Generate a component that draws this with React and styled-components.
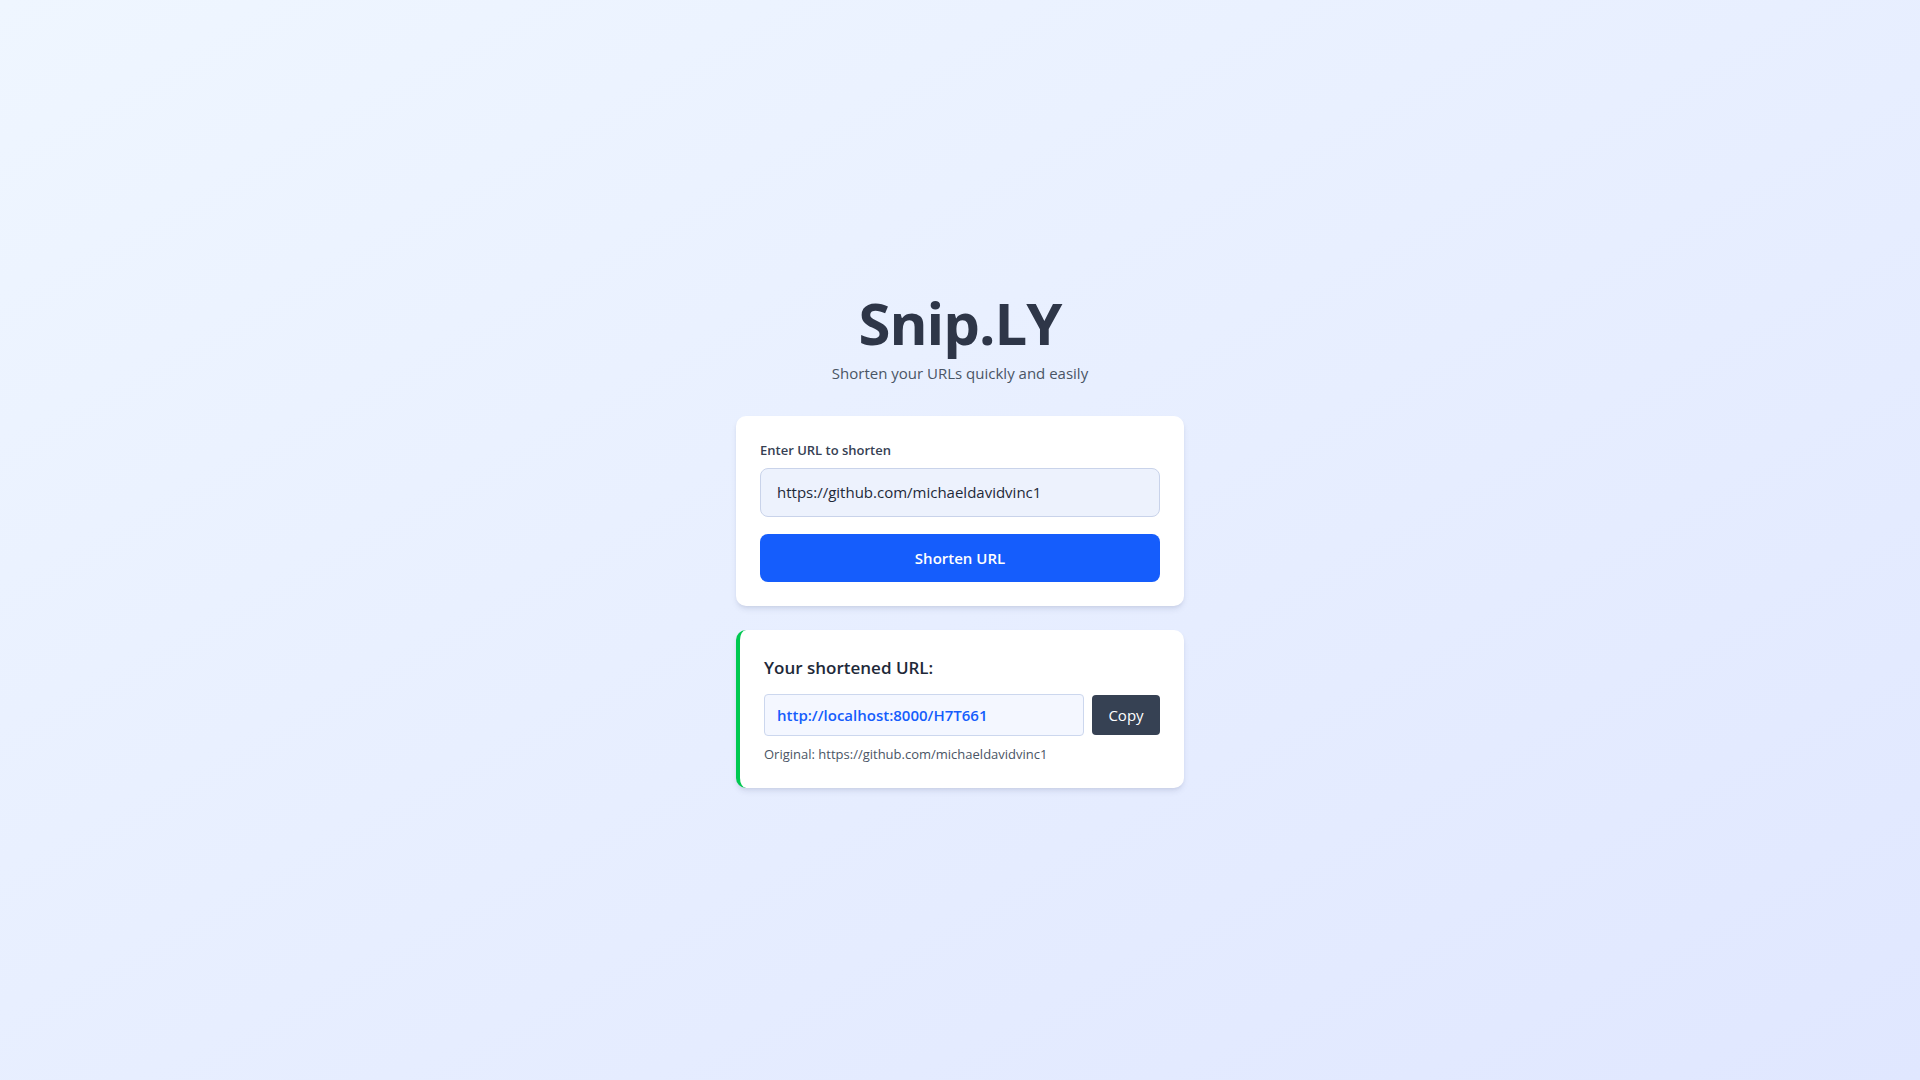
import React, { useState } from 'react'
import styled, { createGlobalStyle } from 'styled-components'

const GlobalStyle = createGlobalStyle`
  html, body {
    margin: 0;
    padding: 0;
  }
  body {
    font-family: "Open Sans", "Noto Sans", "Liberation Sans", sans-serif;
    color: #1e2939;
  }
  * {
    box-sizing: border-box;
  }
`

const Page = styled.div`
  min-height: 100vh;
  display: flex;
  align-items: center;
  justify-content: center;
  background: linear-gradient(to bottom right, #eff6ff, #e0e7ff);
`

const Container = styled.div`
  width: 448px;
  display: flex;
  flex-direction: column;
`

const Header = styled.header`
  text-align: center;
  margin-bottom: 31px;
`

const Title = styled.h1`
  margin: 0 0 8px;
  font-size: 58px;
  line-height: 60px;
  font-weight: 700;
  letter-spacing: -1px;
  color: #2e3648;
`

const Subtitle = styled.p`
  margin: 0;
  font-size: 15px;
  line-height: 24px;
  color: #4a5565;
`

const Card = styled.div`
  background: #fff;
  border-radius: 10px;
  padding: 24px;
  box-shadow: 0 4px 6px -1px rgba(30, 41, 90, 0.1), 0 2px 4px -2px rgba(30, 41, 90, 0.1);
  border-left: ${(p) => (p.accent ? `4px solid ${p.accent}` : 'none')};
  margin-top: ${(p) => (p.spaced ? '24px' : '0')};
`

const Label = styled.label`
  display: block;
  font-size: 13px;
  line-height: 20px;
  font-weight: 600;
  color: #364153;
  margin-bottom: 8px;
`

const UrlInput = styled.input`
  display: block;
  width: 100%;
  height: 49px;
  padding: 0 16px;
  border: 1px solid #c9d3ea;
  border-radius: 8px;
  background: #edf2fd;
  font-family: inherit;
  font-size: 15px;
  color: #1e2939;
  outline: none;
`

const PrimaryButton = styled.button`
  display: block;
  width: 100%;
  height: 48px;
  margin-top: 17px;
  border: none;
  border-radius: 8px;
  background: #155dfc;
  color: #fff;
  font-family: inherit;
  font-size: 15px;
  font-weight: 600;
  cursor: pointer;
`

const ResultTitle = styled.h3`
  margin: 0 0 12px;
  font-size: 17px;
  line-height: 28px;
  font-weight: 600;
  color: #1e2939;
`

const ResultRow = styled.div`
  display: flex;
  align-items: center;
  gap: 8px;
`

const ShortInput = styled.input`
  flex: 1;
  min-width: 0;
  height: 42px;
  padding: 0 12px;
  border: 1px solid #ccd7ee;
  border-radius: 4px;
  background: #f4f7ff;
  font-family: inherit;
  font-size: 15px;
  font-weight: 600;
  color: #155dfc;
  outline: none;
`

const CopyButton = styled.button`
  width: 68px;
  height: 40px;
  border: none;
  border-radius: 4px;
  background: #364153;
  color: #fff;
  font-family: inherit;
  font-size: 15px;
  cursor: pointer;
`

const Original = styled.p`
  margin: 8px 0 0;
  font-size: 13px;
  line-height: 20px;
  color: #4a5565;
`

export default function App() {
  const [url, setUrl] = useState('https://github.com/michaeldavidvinc1')
  const shortUrl = 'http://localhost:8000/H7T661'

  return (
    <Page>
      <GlobalStyle />
      <Container>
        <Header>
          <Title>Snip.LY</Title>
          <Subtitle>Shorten your URLs quickly and easily</Subtitle>
        </Header>

        <Card>
          <Label htmlFor="url">Enter URL to shorten</Label>
          <UrlInput id="url" value={url} onChange={(e) => setUrl(e.target.value)} />
          <PrimaryButton>Shorten URL</PrimaryButton>
        </Card>

        <Card accent="#00c950" spaced>
          <ResultTitle>Your shortened URL:</ResultTitle>
          <ResultRow>
            <ShortInput readOnly value={shortUrl} />
            <CopyButton>Copy</CopyButton>
          </ResultRow>
          <Original>Original: {url}</Original>
        </Card>
      </Container>
    </Page>
  )
}
